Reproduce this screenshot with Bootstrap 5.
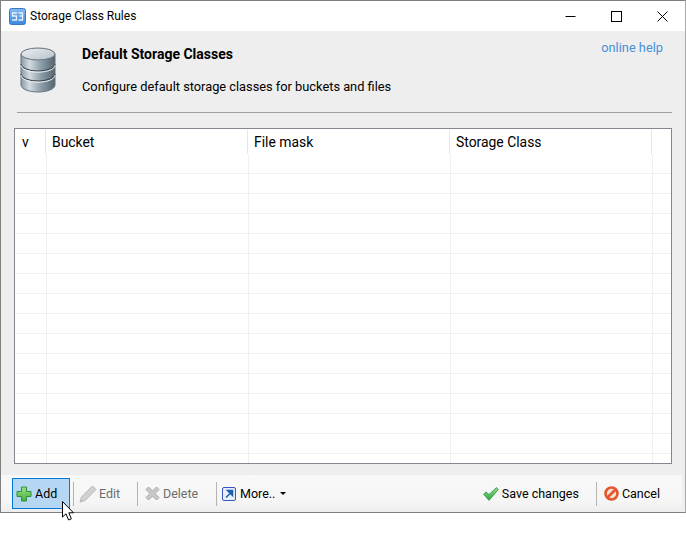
<!DOCTYPE html>
<html lang="en">
<head>
    <meta charset="UTF-8">
    <meta name="viewport" content="width=device-width, initial-scale=1.0">
    <title>Storage Class Rules</title>
    <link href="https://cdn.jsdelivr.net/npm/bootstrap@5.3.0/dist/css/bootstrap.min.css" rel="stylesheet">
    <style>
        html, body {
            background: #fff;
            height: 533px;
            overflow: hidden;
        }
        body {
            font-family: Roboto, "Open Sans", sans-serif;
            font-size: 12.8px;
            color: #000;
        }
        .app-window {
            position: relative;
            width: 686px;
            height: 513px;
            border: 1px solid #7f7f7f;
            border-right-color: #a8a8a8;
            background: #eee;
        }
        .title-bar {
            height: 30px;
            background: #fff;
            padding-left: 8px;
        }
        .title-text {
            margin-left: 4px;
            font-size: 12px;
        }
        .win-btn {
            width: 46px;
            height: 30px;
        }
        .head-panel {
            height: 81px;
            padding: 15px 22px 0 19px;
            position: relative;
        }
        .db-icon {
            width: 36px;
            height: 46px;
            margin-top: 1px;
        }
        .head-text {
            margin-left: 26px;
        }
        .head-title {
            font-weight: 700;
            font-size: 14px;
            line-height: 17px;
            margin: 0;
        }
        .head-sub {
            margin: 15px 0 0;
            line-height: 17px;
        }
        .help-link {
            color: #4a90d9;
            text-decoration: none;
            line-height: 17px;
            margin-top: -7px;
        }
        .head-rule {
            height: 1px;
            background: #a0a0a0;
            margin: 0 13px 0 16px;
            opacity: 1;
            border: 0;
        }
        .grid-wrap {
            margin: 15px 13px 0 13px;
            height: 336px;
            background: #fff;
            border: 1px solid #828790;
            overflow: hidden;
        }
        .grid-head {
            height: 25px;
            padding-top: 1px;
            font-size: 13.9px;
        }
        .grid-head div {
            height: 24px;
            line-height: 24px;
            padding-left: 6px;
            border-right: 1px solid #e5e5e5;
            width: 202px;
        }
        .grid-head .col-v {
            width: 31px;
            padding-left: 7px;
        }
        .rule-table {
            table-layout: fixed;
            width: 657px;
            margin: 0;
            border-collapse: separate;
            border-spacing: 0;
        }
        .rule-table td {
            height: 20px;
            padding: 0;
            border: 0;
            border-right: 1px solid #f0f0f0;
            border-bottom: 1px solid #f0f0f0;
        }
        .rule-table td:last-child {
            border-right: 0;
        }
        .tool-bar {
            position: relative;
            height: 37px;
            width: 681px;
            margin-top: 11px;
            padding: 3px 0 0 11px;
            font-size: 12.5px;
            background: linear-gradient(#f8f8f8, #f6f6f6 70%, #ededed);
        }
        .tool-item {
            height: 31px;
            line-height: 31px;
            white-space: nowrap;
        }
        .tool-item svg {
            flex-shrink: 0;
        }
        .tool-add {
            width: 58px;
            background: #b5d7f3;
            border: 1px solid #0078d7;
            padding-left: 3px;
            gap: 3px;
        }
        .tool-off {
            color: #6d6d6d;
        }
        .tool-sep {
            width: 1px;
            height: 24px;
            margin-top: 4px;
            background: #b4b4b4;
        }
        .sep-a { margin-left: 3px; }
        .tool-edit { margin-left: 5px; gap: 2px; width: 58px; }
        .tool-del { margin-left: 7px; gap: 3px; width: 71px; }
        .tool-more { margin-left: 5px; width: 70px; }
        .more-text { margin-left: 4px; }
        .more-caret { margin-left: 5px; }
        .save-text { margin-left: 3px; }
        .tool-save { margin-right: 17px; }
        .cancel-text { margin-left: 3px; }
        .tool-cancel { margin-left: 7px; margin-right: 22px; }
        .mouse-arrow {
            position: absolute;
            left: 60px;
            top: 500px;
            width: 16px;
            height: 21px;
        }
    </style>
</head>
<body>
    <div class="app-window">
        <!-- title bar -->
        <div class="title-bar d-flex align-items-center">
            <svg width="17" height="17" viewBox="0 0 17 17">
                <defs>
                    <linearGradient id="s3bg" x1="0" y1="0" x2="0" y2="1">
                        <stop offset="0" stop-color="#86bbf0"/>
                        <stop offset="1" stop-color="#3a86de"/>
                    </linearGradient>
                </defs>
                <rect x="0.5" y="0.5" width="16" height="16" rx="2" fill="url(#s3bg)" stroke="#3a78c4"/>
                <path d="M8 5H3.5V8H7.5V12H3M9.5 5H13.5V8H10.5M13.5 8V12H9.5" fill="none" stroke="#e4f1ff" stroke-width="1.3"/>
            </svg>
            <span class="title-text">Storage Class Rules</span>
            <div class="ms-auto d-flex">
                <div class="win-btn d-flex align-items-center justify-content-center">
                    <svg width="11" height="11" viewBox="0 0 11 11"><path d="M0.5 5.5H10.5" stroke="#000"/></svg>
                </div>
                <div class="win-btn d-flex align-items-center justify-content-center">
                    <svg width="11" height="11" viewBox="0 0 11 11"><rect x="0.5" y="0.5" width="10" height="10" fill="none" stroke="#000"/></svg>
                </div>
                <div class="win-btn d-flex align-items-center justify-content-center">
                    <svg width="11" height="11" viewBox="0 0 11 11"><path d="M0.5 0.5L10.5 10.5M10.5 0.5L0.5 10.5" stroke="#000"/></svg>
                </div>
            </div>
        </div>

        <!-- heading -->
        <div class="head-panel d-flex align-items-start">
            <svg class="db-icon" viewBox="0 0 36 46">
                <defs>
                    <linearGradient id="dbside" x1="0" y1="0" x2="1" y2="0">
                        <stop offset="0" stop-color="#8b9aa5"/>
                        <stop offset="0.25" stop-color="#d3dbe0"/>
                        <stop offset="0.6" stop-color="#8a9ca8"/>
                        <stop offset="1" stop-color="#55656f"/>
                    </linearGradient>
                    <linearGradient id="dbtop" x1="0" y1="0" x2="1" y2="1">
                        <stop offset="0" stop-color="#eef1f3"/>
                        <stop offset="1" stop-color="#b4c0c9"/>
                    </linearGradient>
                </defs>
                <path d="M1 7V38C1 42 9 45 18 45S35 42 35 38V7Z" fill="url(#dbside)" stroke="#66717a"/>
                <path d="M1 17C1 21 9 24 18 24S35 21 35 17" fill="none" stroke="#3a464f" stroke-width="1.1"/>
                <path d="M1 18.2C1 22.2 9 25.2 18 25.2S35 22.2 35 18.2" fill="none" stroke="#eef2f4"/>
                <path d="M1 27C1 31 9 34 18 34S35 31 35 27" fill="none" stroke="#3a464f" stroke-width="1.1"/>
                <path d="M1 28.2C1 32.2 9 35.2 18 35.2S35 32.2 35 28.2" fill="none" stroke="#eef2f4"/>
                <ellipse cx="18" cy="7" rx="17" ry="6" fill="url(#dbtop)" stroke="#66717a"/>
            </svg>
            <div class="head-text">
                <h1 class="head-title">Default Storage Classes</h1>
                <p class="head-sub">Configure default storage classes for buckets and files</p>
            </div>
            <a class="help-link ms-auto" href="#">online help</a>
        </div>
        <hr class="head-rule">

        <!-- rules grid -->
        <div class="grid-wrap">
            <div class="grid-head d-flex">
                <div class="col-v">v</div>
                <div>Bucket</div>
                <div>File mask</div>
                <div>Storage Class</div>
            </div>
            <table class="rule-table" id="ruleRows">
                <colgroup>
                    <col style="width:32px"><col style="width:202px"><col style="width:202px"><col style="width:202px"><col>
                </colgroup>
                <tbody></tbody>
            </table>
        </div>

        <!-- toolbar -->
        <div class="tool-bar d-flex">
            <div class="tool-item tool-add d-flex align-items-center">
                <svg width="16" height="16" viewBox="0 0 16 16">
                    <defs>
                        <linearGradient id="plusfill" x1="0" y1="0" x2="0" y2="1">
                            <stop offset="0" stop-color="#9be08a"/>
                            <stop offset="1" stop-color="#43b03c"/>
                        </linearGradient>
                    </defs>
                    <path d="M5.5 1H10.5V5.5H15V10.5H10.5V15H5.5V10.5H1V5.5H5.5Z" fill="url(#plusfill)" stroke="#2f8f35"/>
                </svg>
                <span>Add</span>
            </div>
            <div class="tool-sep sep-a"></div>
            <div class="tool-item tool-off tool-edit d-flex align-items-center">
                <svg width="18" height="18" viewBox="0 0 18 18">
                    <path d="M13.5 1L17 4.5L6 15.5L1 17L2.5 12Z" fill="#d2d2d2" stroke="#b4b4b4"/>
                </svg>
                <span>Edit</span>
            </div>
            <div class="tool-sep"></div>
            <div class="tool-item tool-off tool-del d-flex align-items-center">
                <svg width="15" height="15" viewBox="0 0 15 15">
                    <path d="M1 3.5L3.5 1L7.5 5L11.5 1L14 3.5L10 7.5L14 11.5L11.5 14L7.5 10L3.5 14L1 11.5L5 7.5Z" fill="#c9c9c9" stroke="#a9a9a9"/>
                </svg>
                <span>Delete</span>
            </div>
            <div class="tool-sep"></div>
            <div class="tool-item d-flex align-items-center tool-more">
                <svg width="14" height="14" viewBox="0 0 14 14">
                    <rect x="0.5" y="0.5" width="13" height="13" rx="1.5" fill="#e8eefb" stroke="#3a55c0"/>
                    <path d="M4 10.5L9 5.5M5.5 3.5H10.5V8.5Z" fill="#1c5fae" stroke="#1c5fae" stroke-width="1.5"/>
                </svg>
                <span class="more-text">More..</span>
                <svg class="more-caret" width="6" height="3" viewBox="0 0 6 3"><path d="M0 0H6L3 3Z" fill="#000"/></svg>
            </div>
            <div class="tool-item d-flex align-items-center ms-auto tool-save">
                <svg width="16" height="14" viewBox="0 0 16 14">
                    <defs>
                        <linearGradient id="checkfill" x1="0" y1="0" x2="0" y2="1">
                            <stop offset="0" stop-color="#8fdc86"/>
                            <stop offset="1" stop-color="#35a845"/>
                        </linearGradient>
                    </defs>
                    <path d="M0.6 7.2L3 5L6 7.6L13.4 0.6L15.4 2.4L6 13.4Z" fill="url(#checkfill)" stroke="#2b9040" stroke-width="0.8"/>
                </svg>
                <span class="save-text">Save changes</span>
            </div>
            <div class="tool-sep"></div>
            <div class="tool-item d-flex align-items-center tool-cancel">
                <svg width="15" height="15" viewBox="0 0 15 15">
                    <circle cx="7.5" cy="7.5" r="6" fill="#f8e4da" stroke="#e4562c" stroke-width="2.6"/>
                    <path d="M3.5 11.5L11.5 3.5" stroke="#e4562c" stroke-width="2.6"/>
                </svg>
                <span class="cancel-text">Cancel</span>
            </div>
        </div>

        <!-- mouse pointer left over the Add button -->
        <svg class="mouse-arrow" viewBox="0 0 16 21">
            <path d="M1.5 0.5V16L5 12.8L7.6 19L10.4 17.8L7.8 11.8H12.5Z" fill="#fff" stroke="#000"/>
        </svg>
    </div>

    <script src="https://cdn.jsdelivr.net/npm/bootstrap@5.3.0/dist/js/bootstrap.bundle.min.js"></script>
    <script>
        document.addEventListener("DOMContentLoaded", () => {
            const body = document.querySelector('#ruleRows tbody');
            let html = '';
            for (let i = 0; i < 16; i++) {
                html += '<tr><td></td><td></td><td></td><td></td><td></td></tr>';
            }
            body.innerHTML = html;
        });
    </script>
</body>
</html>
